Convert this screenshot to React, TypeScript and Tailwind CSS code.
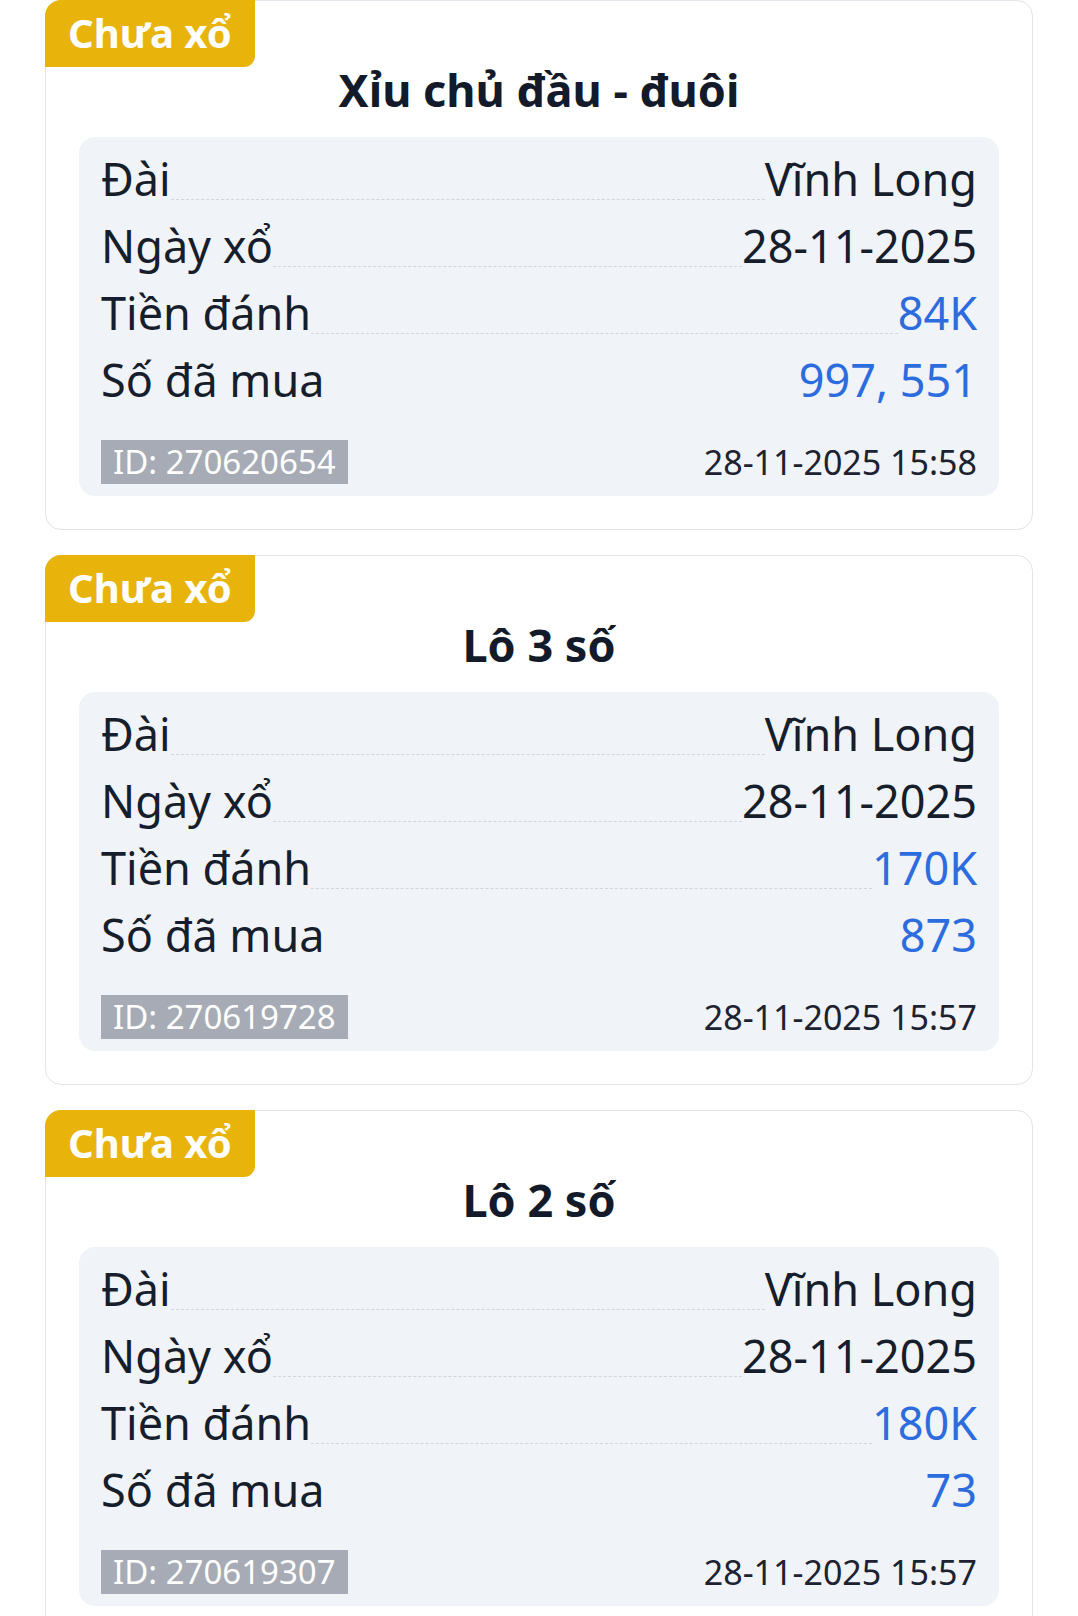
import React from 'react';

interface Ticket {
  id: string;
  title: string;
  station: string;
  drawDate: string;
  amount: string;
  numbers: string;
  createdAt: string;
}

const tickets: Ticket[] = [
  {
    id: '270620654',
    title: 'Xỉu chủ đầu - đuôi',
    station: 'Vĩnh Long',
    drawDate: '28-11-2025',
    amount: '84K',
    numbers: '997, 551',
    createdAt: '28-11-2025 15:58',
  },
  {
    id: '270619728',
    title: 'Lô 3 số',
    station: 'Vĩnh Long',
    drawDate: '28-11-2025',
    amount: '170K',
    numbers: '873',
    createdAt: '28-11-2025 15:57',
  },
  {
    id: '270619307',
    title: 'Lô 2 số',
    station: 'Vĩnh Long',
    drawDate: '28-11-2025',
    amount: '180K',
    numbers: '73',
    createdAt: '28-11-2025 15:57',
  },
];

const Row: React.FC<{ label: string; value: string; blue?: boolean; dashed?: boolean }> = ({
  label,
  value,
  blue,
  dashed = true,
}) => (
  <div className="flex h-[67px] text-[45px] leading-[66px]">
    <span className="text-[#161d2b] whitespace-nowrap">{label}</span>
    <span
      className={`flex-1 self-start mt-[53px] ${dashed ? 'border-t border-dashed border-[#d0d5de]' : ''}`}
    />
    <span className={`whitespace-nowrap ${blue ? 'text-[#2d6cdf]' : 'text-[#161d2b]'}`}>{value}</span>
  </div>
);

const TicketCard: React.FC<{ ticket: Ticket }> = ({ ticket }) => (
  <div className="relative mb-[25px] rounded-[16px] border border-[#e2e4e9] bg-white px-[33px] pt-[59px] pb-[33px]">
    <div className="absolute -top-px -left-px h-[67px] rounded-tl-[16px] rounded-br-[11px] bg-[#e8b40b] px-[23px] text-[40px] font-bold leading-[66px] text-white">
      Chưa xổ
    </div>
    <h3 className="text-center text-[45px] font-bold leading-[60px] text-[#131a2a]">{ticket.title}</h3>
    <div className="mt-[17px] rounded-[16px] bg-[#f0f3f8] px-[22px] pt-[9px] pb-[12px]">
      <Row label="Đài" value={ticket.station} />
      <Row label="Ngày xổ" value={ticket.drawDate} />
      <Row label="Tiền đánh" value={ticket.amount} blue />
      <Row label="Số đã mua" value={ticket.numbers} blue dashed={false} />
      <div className="mt-[26px] flex h-[44px] items-center justify-between leading-[44px]">
        <span className="bg-[#a6abb5] px-[12px] text-[33px] text-white">ID: {ticket.id}</span>
        <span className="text-[34px] text-[#1c2230]">{ticket.createdAt}</span>
      </div>
    </div>
  </div>
);

export default function App() {
  return (
    <div
      className="h-[1616px] overflow-hidden bg-white px-[45px]"
      style={{ fontFamily: '"Noto Sans", "Open Sans", sans-serif' }}
    >
      {tickets.map((t) => (
        <TicketCard key={t.id} ticket={t} />
      ))}
    </div>
  );
}
